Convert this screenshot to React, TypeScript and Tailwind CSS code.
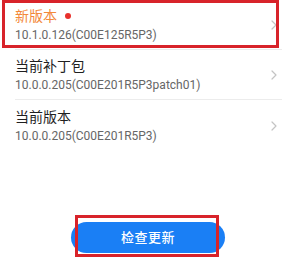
import React from 'react';

interface Row {
  title: string;
  version: string;
  highlight?: boolean;
}

const rows: Row[] = [
  { title: '新版本', version: '10.1.0.126(C00E125R5P3)', highlight: true },
  { title: '当前补丁包', version: '10.0.0.205(C00E201R5P3patch01)' },
  { title: '当前版本', version: '10.0.0.205(C00E201R5P3)' },
];

const Chevron = () => (
  <svg width="6" height="10" viewBox="0 0 6 10" fill="none">
    <path d="M1 1l4 4-4 4" stroke="#c4c4c4" strokeWidth="1.2" strokeLinecap="round" strokeLinejoin="round" />
  </svg>
);

export default function App() {
  return (
    <div
      className="relative w-[296px] h-[259px] bg-white overflow-hidden"
      style={{ fontFamily: 'Roboto, "Noto Sans CJK SC", sans-serif' }}
    >
      {/* list */}
      <div className="ml-[15px] mr-[14px]">
        {rows.map((r, i) => (
          <div
            key={r.title}
            className={`flex items-center h-[50px] pt-[1px] ${i < rows.length - 1 ? 'border-b border-[#ececec]' : ''}`}
          >
            <div className="flex-1 flex flex-col gap-[2px]">
              <div className="flex items-center h-[18px]">
                <span className={`text-[14px] leading-[18px] ${r.highlight ? 'text-[#f3893b]' : 'text-[#1f1f1f]'}`}>
                  {r.title}
                </span>
                {r.highlight && <span className="ml-[8px] w-[6px] h-[6px] rounded-full bg-[#e8312c]" />}
              </div>
              <span className="text-[12px] leading-[16px] text-[#666666]">{r.version}</span>
            </div>
            <div className="pr-[5px]">
              <Chevron />
            </div>
          </div>
        ))}
      </div>

      {/* check button */}
      <div className="flex justify-center mt-[72px]">
        <button className="w-[154px] h-[31px] rounded-full bg-[#1a7ff5] text-white text-[13px] font-medium tracking-[0.5px]">
          检查更新
        </button>
      </div>

      {/* annotation boxes */}
      <div className="absolute left-[2px] top-0 w-[277px] h-[48px] border-[3px] border-[#d8232a]" />
      <div className="absolute left-[75px] top-[215px] w-[144px] h-[42px] border-[3px] border-[#d8232a]" />
    </div>
  );
}
